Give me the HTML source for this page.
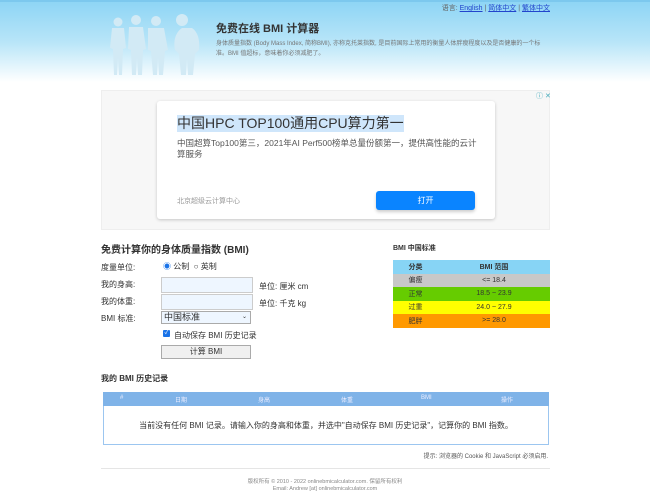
<!DOCTYPE html>
<html><head><meta charset="utf-8"><style>
*{margin:0;padding:0;box-sizing:border-box}
body{width:650px;height:500px;overflow:hidden;background:#fff;font-family:"Liberation Sans","Noto Sans CJK SC",sans-serif;color:#333;position:relative}
.abs{position:absolute}
.hdr{left:0;top:0;width:650px;height:82px;background:linear-gradient(#8ed5f5 0%,#b8e5f8 50%,#fff 100%);border-top:2px solid #7cc8ee}
.lang{right:100px;top:3px;font-size:7px;color:#666}
.lang a{color:#2244cc;text-decoration:underline}
.f{font-size:8px}
input.t{position:absolute;width:92px;height:16px;border:1px solid #ccc;background:#eef6ff}
.tbl td{height:13.5px;text-align:center;font-size:7px}
</style></head><body>
<div class="abs hdr"></div>
<div class="abs lang">语言: <a>English</a> | <a>简体中文</a> | <a>繁体中文</a></div>
<svg class="abs" style="left:108px;top:14px" width="92" height="62" viewBox="0 0 92 62" fill="#d2eaf5">
<circle cx="10" cy="8" r="4.5"/><path d="M4 14h12l2 20-3 1-1 26h-3l-1-18-1 18H6L5 35l-3-1z"/>
<circle cx="28" cy="6" r="5"/><path d="M21 13h14l3 22-3 1-1 25h-4l-1-18-1 18h-4l-1-25-3-1z"/>
<circle cx="48" cy="7" r="5"/><path d="M40 14h16l4 22-3 1-2 24h-4l-1-18-1 18h-4l-2-24-3-1z"/>
<circle cx="74" cy="6" r="6"/><path d="M64 14h20c6 4 8 12 7 22l-4 4-2 21h-5l-1-17-1 17h-5l-2-21-4-4c-2-10 1-18 7-22z"/>
</svg>
<div class="abs" style="left:216px;top:20px;font-size:11px;font-weight:bold;color:#333">免费在线 BMI 计算器</div>
<div class="abs" style="left:216px;top:39px;width:330px;font-size:6px;line-height:10px;color:#777">身体质量指数 (Body Mass Index, 简称BMI), 亦称克托莱指数, 是目前国际上常用的衡量人体胖瘦程度以及是否健康的一个标准。BMI 值超标，意味着你必须减肥了。</div>

<div class="abs" style="left:101px;top:90px;width:449px;height:140px;background:#f7f7f7;border:1px solid #eee"></div>
<div class="abs" style="left:536px;top:91px;font-size:7px;color:#4ab"> ⓘ ✕</div>
<div class="abs" style="left:157px;top:101px;width:338px;height:118px;background:#fff;border-radius:3px;box-shadow:0 1px 3px rgba(0,0,0,.2)"></div>
<div class="abs" style="left:177px;top:115px;font-size:14px;color:#333;background:#cfe6fb;line-height:17px">中国HPC TOP100通用CPU算力第一</div>
<div class="abs" style="left:177px;top:138px;width:300px;font-size:8.5px;line-height:11px;color:#555">中国超算Top100第三，2021年AI Perf500榜单总量份额第一，提供高性能的云计算服务</div>
<div class="abs" style="left:177px;top:196px;font-size:7px;color:#999">北京超级云计算中心</div>
<div class="abs" style="left:376px;top:191px;width:99px;height:19px;background:#0a84ff;border-radius:3px;color:#fff;font-size:8px;text-align:center;line-height:19px;box-shadow:0 2px 3px rgba(0,0,0,.2)">打开</div>

<div class="abs" style="left:101px;top:241px;font-size:10px;font-weight:bold">免费计算你的身体质量指数 (BMI)</div>
<div class="abs f" style="left:101px;top:262px">度量单位:</div>
<div class="abs f" style="left:163px;top:261px"><span style="color:#1a73e8">◉</span> 公制 &nbsp;○ 英制</div>
<div class="abs f" style="left:101px;top:279px">我的身高:</div>
<input class="t" style="left:161px;top:277px">
<div class="abs f" style="left:259px;top:281px">单位: 厘米 cm</div>
<div class="abs f" style="left:101px;top:296px">我的体重:</div>
<input class="t" style="left:161px;top:294px">
<div class="abs f" style="left:259px;top:298px">单位: 千克 kg</div>
<div class="abs f" style="left:101px;top:313px">BMI 标准:</div>
<div class="abs" style="left:161px;top:311px;width:90px;height:13px;border:1px solid #aaa;background:#eef6ff;font-size:9px;line-height:11px;padding-left:2px">中国标准<span style="position:absolute;right:3px;font-size:6px">⌄</span></div>
<div class="abs" style="left:163px;top:330px;width:7px;height:7px;background:#1a73e8;border-radius:1px;color:#fff;font-size:6px;line-height:7px;text-align:center">✓</div>
<div class="abs f" style="left:174px;top:330px">自动保存 BMI 历史记录</div>
<div class="abs" style="left:161px;top:345px;width:90px;height:14px;border:1px solid #aaa;background:#f0f0f0;font-size:8px;text-align:center;line-height:12px">计算 BMI</div>

<div class="abs" style="left:393px;top:243px;font-size:7px;font-weight:bold">BMI 中国标准</div>
<table class="abs tbl" style="left:393px;top:260px;width:157px;border-collapse:collapse">
<tr style="background:#87d4f5;font-weight:bold"><td style="width:45px">分类</td><td>BMI 范围</td></tr>
<tr style="background:#c8c8c8"><td>偏瘦</td><td>&lt;= 18.4</td></tr>
<tr style="background:#66cc00"><td>正常</td><td>18.5 ~ 23.9</td></tr>
<tr style="background:#ffff00"><td>过重</td><td>24.0 ~ 27.9</td></tr>
<tr style="background:#ff9900"><td>肥胖</td><td>&gt;= 28.0</td></tr>
</table>

<div class="abs" style="left:101px;top:373px;font-size:8px;font-weight:bold">我的 BMI 历史记录</div>
<div class="abs" style="left:103px;top:392px;width:446px;height:53px;border:1px solid #9cc6f0"></div>
<div class="abs" style="left:103px;top:392px;width:446px;height:14px;background:#7fb3e8;font-size:6px;color:#eef">
<span class="abs" style="left:17px;top:3px">#</span><span class="abs" style="left:72px;top:3px">日期</span><span class="abs" style="left:155px;top:3px">身高</span><span class="abs" style="left:238px;top:3px">体重</span><span class="abs" style="left:318px;top:3px">BMI</span><span class="abs" style="left:398px;top:3px">操作</span></div>
<div class="abs" style="left:103px;top:420px;width:446px;text-align:center;font-size:8px">当前没有任何 BMI 记录。请输入你的身高和体重，并选中"自动保存 BMI 历史记录"，记算你的 BMI 指数。</div>
<div class="abs" style="right:102px;top:451px;font-size:6px;color:#555">提示: 浏览器的 Cookie 和 JavaScript 必须启用.</div>
<div class="abs" style="left:101px;top:468px;width:449px;height:1px;background:#e5e5e5"></div>
<div class="abs" style="left:0;top:479px;width:650px;text-align:center;font-size:5.5px;line-height:7px;color:#888">版权所有 © 2010 - 2022 onlinebmicalculator.com. 保留所有权利<br>Email: Andrew [at] onlinebmicalculator.com</div>
</body></html>
